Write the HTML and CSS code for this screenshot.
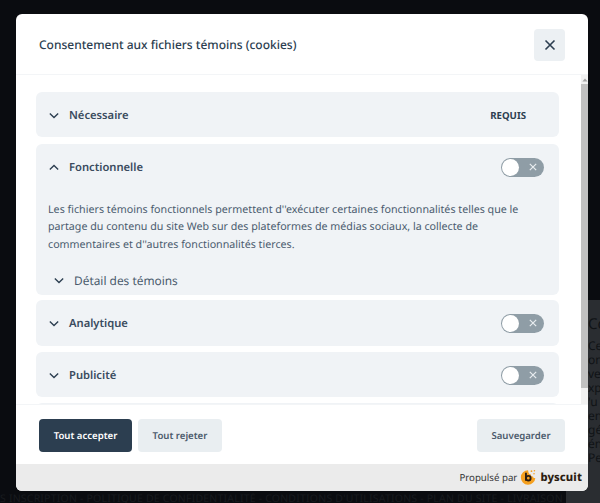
FILE: index.html
```
<!DOCTYPE html>
<html lang="fr">
<head>
<meta charset="utf-8">
<title>Consentement</title>
<link rel="stylesheet" href="styles.css">
</head>
<body>
<div class="backdrop">
  <div class="bg-panel"><span class="bg-title">Co</span><span>Ce</span><span>on</span><span>ve</span><span>xp</span><span>'u</span><span>en</span><span>gé</span><span>én</span><span>Pe</span></div>
  <div class="bg-foot">S INSCRIPTION - POLITIQUE DE CONFIDENTIALITÉ - CONDITIONS D'UTILISATIONS - PLAN DU SITE - LIVRAISON</div>
</div>
<div class="overlay">
  <div class="modal">
    <header class="head">
      <h1 class="title">Consentement aux fichiers témoins (cookies)</h1>
      <button class="close" aria-label="Fermer"><svg viewBox="0 0 12 12" width="12" height="12"><path d="M1.5 1.5l9 9M10.5 1.5l-9 9" class="ink"/></svg></button>
    </header>
    <div class="scroll">
      <div class="list">
        <section class="card first">
          <div class="row">
            <svg class="chev" viewBox="0 0 12 8" width="10" height="7"><path d="M1 1.5l5 5 5-5" class="ink"/></svg>
            <span class="name">Nécessaire</span>
            <span class="req">REQUIS</span>
          </div>
        </section>
        <section class="card open">
          <div class="row">
            <svg class="chev" viewBox="0 0 12 8" width="10" height="7"><path d="M1 6.5l5-5 5 5" class="ink"/></svg>
            <span class="name">Fonctionnelle</span>
            <span class="toggle"><span class="knob"></span><svg viewBox="0 0 10 10" width="8" height="8"><path d="M1 1l8 8M9 1l-8 8" class="x"/></svg></span>
          </div>
          <p class="desc">Les fichiers témoins fonctionnels permettent d''exécuter certaines fonctionnalités telles que le partage du contenu du site Web sur des plateformes de médias sociaux, la collecte de commentaires et d''autres fonctionnalités tierces.</p>
          <div class="detail">
            <svg class="chev" viewBox="0 0 12 8" width="10" height="7"><path d="M1 1.5l5 5 5-5" class="ink"/></svg>
            <span>Détail des témoins</span>
          </div>
        </section>
        <section class="card tall">
          <div class="row">
            <svg class="chev" viewBox="0 0 12 8" width="10" height="7"><path d="M1 1.5l5 5 5-5" class="ink"/></svg>
            <span class="name">Analytique</span>
            <span class="toggle"><span class="knob"></span><svg viewBox="0 0 10 10" width="8" height="8"><path d="M1 1l8 8M9 1l-8 8" class="x"/></svg></span>
          </div>
        </section>
        <section class="card">
          <div class="row">
            <svg class="chev" viewBox="0 0 12 8" width="10" height="7"><path d="M1 1.5l5 5 5-5" class="ink"/></svg>
            <span class="name">Publicité</span>
            <span class="toggle"><span class="knob"></span><svg viewBox="0 0 10 10" width="8" height="8"><path d="M1 1l8 8M9 1l-8 8" class="x"/></svg></span>
          </div>
        </section>
        <section class="card stub"></section>
      </div>
      <div class="scrollbar">
        <svg viewBox="0 0 8 5" width="6" height="4" class="arrow"><path d="M4 0.5L7.5 4.5H0.5z"/></svg>
        <div class="thumb"></div>
      </div>
    </div>
    <footer class="actions">
      <button class="btn primary">Tout accepter</button>
      <button class="btn reject">Tout rejeter</button>
      <button class="btn save">Sauvegarder</button>
    </footer>
    <div class="brand">
      <span>Propulsé par</span>
      <svg class="logo" viewBox="0 0 20 20" width="17" height="17">
        <path d="M9.5 1.5A8.5 8.5 0 1 0 18 10.5c-1.6.6-2.6-.2-2.6-1.6-1.6.2-2.8-.8-2.6-2.4-1.8 0-3-1.4-3.3-5z" fill="#f5a01f"/>
        <path d="M7 4.5v9.2" stroke="#2b1d12" stroke-width="2.2" fill="none"/>
        <circle cx="9.8" cy="10.8" r="2.7" stroke="#2b1d12" stroke-width="2.2" fill="none"/>
        <circle cx="13.5" cy="2.5" r="1" fill="#f5a01f"/><circle cx="17" cy="2" r=".9" fill="#f5a01f"/><circle cx="16.5" cy="5.5" r=".9" fill="#f5a01f"/>
      </svg>
      <span class="word">byscuit</span>
    </div>
  </div>
</div>
</body>
</html>
```
FILE: styles.css
```
* { box-sizing: border-box; }
html, body { margin: 0; height: 100%; }
body {
  width: 600px; height: 503px; overflow: hidden; position: relative;
  background: #0a0c10;
  font-family: "Noto Sans", sans-serif;
  color: #2c3e50;
  text-rendering: geometricPrecision;
}
.backdrop { position: absolute; inset: 0; overflow: hidden; }
.bg-panel {
  position: absolute; left: 566px; top: 300px; width: 34px; height: 203px; overflow: hidden;
  background: #2a2d31; color: #101316; font-size: 12px; line-height: 14px;
  display: flex; flex-direction: column; padding: 15px 0 0 22px; white-space: nowrap;
}
.bg-panel span { flex: none; }
.bg-panel .bg-title { font-size: 15px; line-height: 18px; margin-bottom: 6px; }
.bg-foot {
  position: absolute; left: 0; top: 493px; width: 566px; height: 10px; overflow: hidden; white-space: nowrap;
  font-size: 10.5px; line-height: 12px; color: #181b1f; letter-spacing: .2px;
}
.overlay { position: relative; height: 503px; padding: 14px 12px 12px 16px; }
.modal {
  width: 572px; height: 477px; background: #fff; border-radius: 6px;
  display: flex; flex-direction: column; overflow: hidden;
}
.head {
  height: 61px; flex: none; display: flex; align-items: center; justify-content: space-between;
  padding: 1px 23px 0 23px; border-bottom: 1px solid #f3f5f7;
}
.title { margin: 0; font-size: 12px; font-weight: 500; color: #2c3e50; }
.close {
  width: 31px; height: 32px; border: 0; border-radius: 4px; background: #ecf0f3;
  display: flex; align-items: center; justify-content: center; padding: 0;
}
.ink { fill: none; stroke: #2c3e50; stroke-width: 1.6; }
.x { fill: none; stroke: #e8ecef; stroke-width: 1.5; }
.scroll { flex: 1; min-height: 0; display: flex; overflow: hidden; }
.list {
  flex: 1; min-width: 0; padding: 17px 22px 0 20px;
  display: flex; flex-direction: column; gap: 6px; overflow: hidden;
}
.card { background: #f0f3f6; border-radius: 6px; flex: none; }
.card.first { margin-bottom: 1px; }
.card.open { height: 151px; margin-bottom: -1px; }
.card.tall { height: 46px; }
.stub { height: 30px; }
.row { height: 45px; padding: 1px 15px 0 13px; display: flex; align-items: center; }
.chev { flex: none; margin-right: 10px; }
.name { font-size: 11.2px; font-weight: 600; color: #3a4b5e; }
.req { margin-left: auto; margin-right: 18px; font-size: 9.7px; font-weight: 700; color: #2c3e50; }
.toggle {
  margin-left: auto; width: 43px; height: 19px; border-radius: 10px; background: #8f9da6;
  display: flex; align-items: center; justify-content: flex-end; padding: 0 7px 0 1px; position: relative;
}
.knob { position: absolute; left: 1px; top: 1px; width: 17px; height: 17px; border-radius: 50%; background: #fff; }
.desc {
  margin: 0; padding: 13px 12px 0 12px; font-size: 10.7px; line-height: 17.3px; color: #4a5b6e;
}
.detail {
  display: flex; align-items: center; padding: 18px 0 0 18px; font-size: 11.9px; color: #4a5a6c; height: 36px;
}
.scrollbar {
  width: 7px; flex: none; background: #f1f1f1; display: flex; flex-direction: column; align-items: center;
}
.arrow { fill: #a3a3a3; margin-top: 3px; }
.thumb { width: 7px; height: 304px; margin-top: 2px; background: #c1c1c1; }
.actions {
  height: 59px; flex: none; display: flex; align-items: center; gap: 6px; padding: 2px 23px 0; background: #fff;
  box-shadow: 0 -1px 0 #f3f5f7;
}
.btn {
  height: 33px; border: 0; border-radius: 4px; background: #e9eef1; color: #4b5a6b; white-space: nowrap;
  font: 600 9.6px "Noto Sans", sans-serif; padding: 0; text-rendering: geometricPrecision;
}
.btn.primary { background: #2c3e50; color: #fff; width: 93px; }
.btn.reject { width: 84px; }
.btn.save { margin-left: auto; width: 88px; }
.brand {
  height: 27px; flex: none; background: #ebebeb; display: flex; align-items: center; justify-content: flex-end;
  padding: 0 6px 0 0; font-size: 9.7px; color: #333; gap: 3px;
}
.logo { flex: none; }
.word { font-size: 11.2px; font-weight: 800; color: #2b1d12; letter-spacing: .1px; }
```
